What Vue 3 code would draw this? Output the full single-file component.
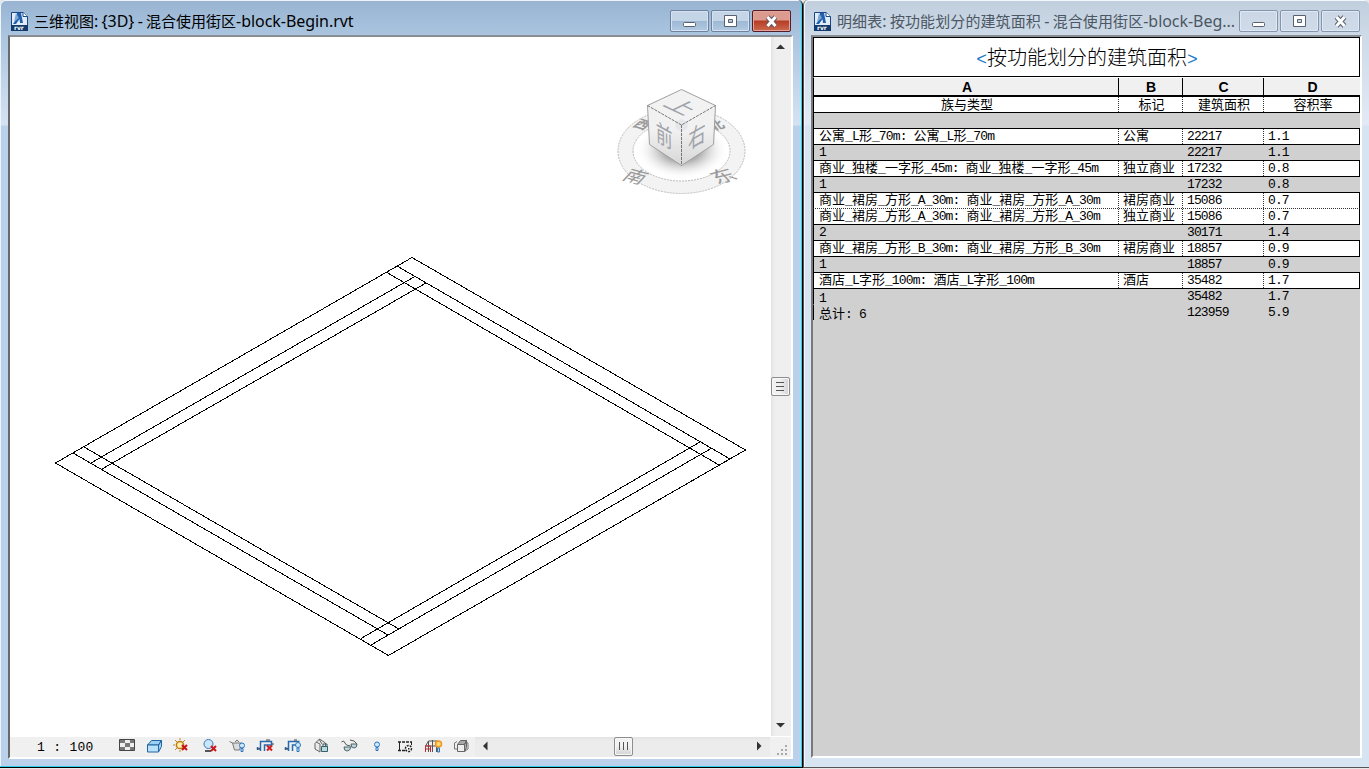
<script setup>
const rows = [
  { kind: 'gap', cells: ['', '', '', ''] },
  { kind: 'item', cells: ['公寓_L形_70m: 公寓_L形_70m', '公寓', '22217', '1.1'] },
  { kind: 'sum', cells: ['1', '', '22217', '1.1'] },
  { kind: 'item', cells: ['商业_独楼_一字形_45m: 商业_独楼_一字形_45m', '独立商业', '17232', '0.8'] },
  { kind: 'sum', cells: ['1', '', '17232', '0.8'] },
  { kind: 'item', cells: ['商业_裙房_方形_A_30m: 商业_裙房_方形_A_30m', '裙房商业', '15086', '0.7'] },
  { kind: 'item again', cells: ['商业_裙房_方形_A_30m: 商业_裙房_方形_A_30m', '独立商业', '15086', '0.7'] },
  { kind: 'sum', cells: ['2', '', '30171', '1.4'] },
  { kind: 'item', cells: ['商业_裙房_方形_B_30m: 商业_裙房_方形_B_30m', '裙房商业', '18857', '0.9'] },
  { kind: 'sum', cells: ['1', '', '18857', '0.9'] },
  { kind: 'item', cells: ['酒店_L字形_100m: 酒店_L字形_100m', '酒店', '35482', '1.7'] },
  { kind: 'sum last', cells: ['1', '', '35482', '1.7'] },
  { kind: 'total last', cells: ['总计: 6', '', '123959', '5.9'] },
]
const heads = ['族与类型', '标记', '建筑面积', '容积率']
// Latin runs and CJK runs take different faces and spacing
const runs = (s) => (s.match(/[\x20-\x7e]+|[^\x20-\x7e]+/g) || []).map((t) => ({ t, a: t.charCodeAt(0) < 127 }))
const titleLeft = runs('三维视图: {3D} - 混合使用街区-block-Begin.rvt')
const titleRight = runs('明细表: 按功能划分的建筑面积 - 混合使用街区-block-Beg...')
const redX = 'M0 0l5 5M5 0l-5 5'
</script>

<template>
  <div class="desk">
    <section class="win active">
      <header>
        <svg class="logo" width="18" height="20" viewBox="0 0 18 20">
          <path d="M.5 .5H12L16.500 4.500V18.500H.5z" fill="#e3edf7" stroke="#1a478a" />
          <path d="M12 .5V4.500H16.500" fill="#fff" stroke="#1a478a" />
          <path d="M6 1L10 1 12 11H9L8.500 7 5 12H2L6 6z" fill="#2160ae" /><path d="M5 1L8 6 3 10z" fill="#7da7d5" />
          <path d="M0 13H17V19H0z" fill="#123b6b" />
          <text x="3" y="17.500">rvr</text>
        </svg>
        <h1><span v-for="(r, i) in titleLeft" :key="i" :class="{ latin: r.a }">{{ r.t }}</span></h1>
        <div class="btns">
          <i><svg width="38" height="21"><rect x="12.500" y="11.500" width="12" height="4" rx="1" fill="#fff" stroke="#59616e" /></svg></i>
          <i><svg width="38" height="21"><path d="M12.500 4.500h12v11h-12zM16.500 8.500v3h4v-3z" fill="#fff" fill-rule="evenodd" stroke="#59616e" /></svg></i>
          <i class="close"><svg width="38" height="21"><path d="M14.500 6l8 9M22.500 6l-8 9" stroke="#66565f" stroke-width="5" /><path d="M14.500 6l8 9M22.500 6l-8 9" stroke="#fff" stroke-width="3" /></svg></i>
        </div>
      </header>
      <div class="client">
        <div class="upper">
          <svg class="canvas" width="761" height="700" viewBox="10 37 761 700">
            <g stroke="#000" fill="none" shape-rendering="crispEdges">
              <path d="M412 257.500L745.500 450 388.500 655.500 55.500 463z" />
              <path d="M397 266L730 459M386 272L719 465M414 277L91 463M426 283L102 469M84 447L399 629M73 453L388 635M700 442L361 638.500M711 448.500L371 645" />
            </g>
            <defs>
              <radialGradient id="sh"><stop offset=".4" stop-color="#777" stop-opacity=".6" /><stop offset="1" stop-color="#fff" stop-opacity="0" /></radialGradient>
              <linearGradient id="fa" x2="0" y2="1"><stop offset=".4" stop-color="#f1f1f1" /><stop offset="1" stop-color="#d7d7d7" /></linearGradient>
            </defs>
            <path d="M618 151a63.500 42.500 0 1 0 127 0a63.500 42.500 0 1 0 -127 0M633 151a48.500 30 0 1 0 97 0a48.500 30 0 1 0 -97 0" fill="#f3f3f3" fill-rule="evenodd" stroke="#bbb" stroke-dasharray="2 1" />
            <g class="dirs">
              <text transform="matrix(.8 .25 -.7 .6 632 126)">西</text>
              <text transform="matrix(.8 -.25 .5 .65 713 131)">北</text>
              <text class="big" transform="matrix(.9 .25 -.6 .65 621 179)">南</text>
              <text class="big" transform="matrix(1 -.25 .6 .65 717 184)">东</text>
            </g>
            <ellipse cx="682" cy="150" rx="46" ry="29" fill="url(#sh)" />
            <path d="M647.500 105.500L681.500 125V165.500L649.500 144.500z" fill="url(#fa)" />
            <path d="M715.500 105.500L681.500 125V165.500L713.500 144.500z" fill="url(#fa)" />
            <path d="M681.500 89.500L715.500 105.500 681.500 125 647.500 105.500z" fill="#f2f2f2" />
            <path d="M681.500 119l6 3v6l-6 4-6-4v-6z" fill="#e2e4e8" opacity=".8" />
            <path d="M647.500 105.500L681.500 89.500 715.500 105.500 713.500 144.500 681.500 165.500 649.500 144.500z" fill="none" stroke="#a0a0a0" />
            <path d="M647.500 105.500L681.500 125 715.500 105.500M681.500 125V165.500" fill="none" stroke="#777" stroke-dasharray="3 1" />
            <g class="faces">
              <text transform="matrix(.76 .42 .02 1.100 656 140)">前</text>
              <text transform="matrix(.8 -.46 -.02 1.100 688 150)">右</text>
              <text transform="matrix(1.050 .5 -.95 .46 662 105)">上</text>
            </g>
          </svg>
          <div class="vbar">
            <svg width="20" height="20"><path d="M5 12l4.500-4.500L14 12z" fill="#333" /></svg>
            <b><svg width="19" height="18"><path d="M4 4.500h8M4 8.500h8M4 12.500h8" stroke="#555" /></svg></b>
            <svg width="20" height="20"><path d="M5 7h9l-4.500 4.500z" fill="#333" /></svg>
          </div>
        </div>
        <div class="lower">
          <span class="scale">1 : 100</span>
          <div class="tools">
            <svg viewBox="111 737 28 20"><path d="M119.500 739.500h15v11h-15z" fill="#eee" stroke="#444" /><path d="M120 740h5v3h-5zM130 740h4v3h-4zM125 743h5v4h-5zM120 747h5v3h-5zM130 747h4v3h-4z" fill="#777" /></svg>
            <svg viewBox="139 737 28 20"><path d="M147.500 745l4-4.500h10l-3 4.500zM158.500 745l3-4.500v6l-3 5.500z" fill="#9bd0f5" stroke="#23669f" /><path d="M147.500 745h11v7h-11z" fill="#b9e1fb" stroke="#23669f" /></svg>
            <svg viewBox="167 737 28 20"><circle cx="180" cy="745" r="3.600" fill="#fff0b0" stroke="#ba7d18" stroke-width="1.500" /><path d="M180 738v2M173 745h2M175 740l2 2M185 740l-2 2M175 750l2-2M180 750v2" stroke="#c78b1d" /><path :d="redX" transform="translate(182 745)" stroke="#c91419" stroke-width="2" /></svg>
            <svg viewBox="195 737 28 20"><circle cx="208.500" cy="744" r="4.500" fill="#c9e6fc" stroke="#3d77b3" /><path d="M205 751h6" stroke="#555" stroke-width="2" /><path :d="redX" transform="translate(211 746)" stroke="#c91419" stroke-width="2" /></svg>
            <svg viewBox="223 737 28 20"><path d="M229.500 741.500l3 1.500 2 7h5l2-7h-9M235 742l2-2 2 2" fill="#ddd" stroke="#777" /><g fill="#cdeaff" stroke="#2d76bb"><circle cx="242" cy="745.500" r="2.500" /><path d="M241 748.500h2v3h-2z" /></g></svg>
            <svg viewBox="251 737 28 20"><path d="M260.500 751v-9.500h11v3M264.500 751v-6h8M258 748.500h2M257.500 747v3" fill="none" stroke="#266aad" stroke-width="1.500" /><path d="M266 740h4M257 749h3M272 744h2" stroke="#444" /><path :d="redX" transform="translate(267 745.500)" stroke="#d01e20" stroke-width="2" /></svg>
            <svg viewBox="279 737 28 20"><path d="M288.500 751v-9.500h11M292.500 751v-6h4M286 748.500h2M285.500 747v3" fill="none" stroke="#266aad" stroke-width="1.500" /><path d="M294 740h3M285 749h3" stroke="#444" /><g fill="#cdeaff" stroke="#2d76bb"><circle cx="298" cy="745" r="2.500" /><path d="M297 748h2v3.500h-2z" /></g></svg>
            <svg viewBox="307 737 28 20"><path d="M314.500 744l5-5 6 4v4M315 744v5l5 3v-8l-4-2M319 739l3 5" fill="#e8e8e8" stroke="#666" /><path d="M323 747v-3h4v3" fill="none" stroke="#355f68" /><path d="M321.500 746.500h6v5h-6z" fill="#b9dbdf" stroke="#355f68" /></svg>
            <svg viewBox="335 737 28 20"><path d="M341.500 742l2-1 3 4 4 1M350 740l4 1 3 3" fill="none" stroke="#555" /><path d="M344 747q0 4 3 4t4-4zM351 744q0 4 3 4t3-4z" fill="#c1d8dc" stroke="#4d666a" /></svg>
            <svg viewBox="363 737 28 20"><g fill="#cdeaff" stroke="#2d76bb"><circle cx="377" cy="744.500" r="2.500" /><path d="M376 747.500h2v3h-2z" /></g></svg>
            <svg viewBox="391 737 28 20"><path d="M398 742h14M398 750.500h8" stroke="#222" stroke-width="1.500" stroke-dasharray="3 1" /><path d="M399.500 742v9M411.500 742v3" stroke="#222" /><circle cx="408.500" cy="748.500" r="3" fill="#fff" stroke="#222" stroke-width="1.500" stroke-dasharray="2 1" /><path d="M408 748h1.500v1.500H408z" fill="#222" /></svg>
            <svg viewBox="419 737 28 20"><path d="M425.500 746l3-5h9M428.500 741v11M432.500 740v12M436.500 741v11M425.500 746h11" fill="none" stroke="#555" /><path d="M425.500 752v-6h5v6M425.500 749h5" fill="none" stroke="#c3282d" /><circle cx="438.500" cy="744" r="3" fill="#ffd968" stroke="#ee9525" stroke-width="1.500" /><path d="M437.500 748h2v4h-2z" fill="#bcdcf5" stroke="#2d76bb" /></svg>
            <svg viewBox="447 737 28 20"><path d="M454 743.500l3-2M464 741l4 2v6l-3 2M454.500 743v6h3" fill="none" stroke="#777" /><path d="M457.500 744.500l3-4h6l-2 4zM464.500 744.500l2-4v7l-2 4.500z" fill="#aaa" stroke="#666" /><path d="M457.500 744.500h7v7h-7z" fill="#eee" stroke="#666" /></svg>
          </div>
          <div class="hbar">
            <svg width="20" height="19"><path d="M12.500 4.500v9L8 9z" fill="#333" /></svg>
            <b><svg width="18" height="18"><path d="M4.500 4v8M8.500 4v8M12.500 4v8" stroke="#555" /></svg></b>
            <svg width="20" height="19"><path d="M7 4.500v9l4.500-4.500z" fill="#333" /></svg>
          </div>
          <svg class="grip" width="21" height="20"><path d="M15 9h2M11 13h2M15 13h2M7 17h2M11 17h2M15 17h2" stroke="#aaa" stroke-width="2" /></svg>
        </div>
      </div>
    </section>

    <section class="win idle">
      <header>
        <svg class="logo" width="18" height="20" viewBox="0 0 18 20">
          <path d="M.5 .5H12L16.500 4.500V18.500H.5z" fill="#e3edf7" stroke="#1a478a" />
          <path d="M12 .5V4.500H16.500" fill="#fff" stroke="#1a478a" />
          <path d="M6 1L10 1 12 11H9L8.500 7 5 12H2L6 6z" fill="#2160ae" /><path d="M5 1L8 6 3 10z" fill="#7da7d5" />
          <path d="M0 13H17V19H0z" fill="#123b6b" />
          <text x="3" y="17.500">rvr</text>
        </svg>
        <h1><span v-for="(r, i) in titleRight" :key="i" :class="{ latin: r.a }">{{ r.t }}</span></h1>
        <div class="btns">
          <i><svg width="38" height="21"><rect x="12.500" y="11.500" width="12" height="4" rx="1" fill="#fff" stroke="#59616e" /></svg></i>
          <i><svg width="38" height="21"><path d="M12.500 4.500h12v11h-12zM16.500 8.500v3h4v-3z" fill="#fff" fill-rule="evenodd" stroke="#59616e" /></svg></i>
          <i><svg width="38" height="21"><path d="M14.500 6l8 9M22.500 6l-8 9" stroke="#59616e" stroke-width="5" /><path d="M14.500 6l8 9M22.500 6l-8 9" stroke="#fff" stroke-width="3" /></svg></i>
        </div>
      </header>
      <div class="client sheet">
        <div class="name"><em>&lt;</em>按功能划分的建筑面积<em>&gt;</em></div>
        <div class="row letters"><span>A</span><span>B</span><span>C</span><span>D</span></div>
        <div class="row item heads"><span v-for="h in heads" :key="h">{{ h }}</span></div>
        <div v-for="(r, i) in rows" :key="i" class="row" :class="r.kind">
          <span v-for="(c, j) in r.cells" :key="j"><u v-for="(p, k) in runs(c)" :key="k" :class="{ mono: p.a }">{{ p.t }}</u></span>
        </div>
      </div>
    </section>
  </div>
</template>

<style>
body { overflow: hidden; background: #000; }
</style>
<style scoped>
* { box-sizing: border-box; }
svg { display: block; flex: none; fill: none; }
.desk { display: flex; width: 1369px; height: 769px; background: #e8e8e8; font-family: "Noto Sans CJK SC", sans-serif; color: #000; }
.win { height: 768px; display: flex; flex-direction: column; flex: none; }
.active {
  width: 803px; padding: 0 9px 0 8px; border: solid #000; border-width: 0 1px 1px 0;
  border-radius: 5px 5px 0 0;
  box-shadow: inset -1px -1px #2ad0ec, inset 1px 1px #eef4fb;
  background: linear-gradient(#97b3d1, #abc5e0 36px, #d5e3f3 125px, #b9d1ea 126px);
}
.idle {
  width: 566px; padding: 0 8px 0 7px; border-left: 1px solid #555; border-bottom: 1px solid #555;
  border-radius: 5px 5px 0 0;
  box-shadow: inset 1px 1px #f2f7fc;
  background: linear-gradient(#c0cedd, #cedae8 36px, #e2ebf5 125px, #d7e4f2 126px);
}
header { height: 35px; flex: none; display: flex; padding-left: 3px; }
.active header { padding-right: 2px; }
.idle header { padding-right: 1px; }
.logo { margin-top: 12px; }
.logo text { font: bold 6px "DejaVu Sans", sans-serif; fill: #fff; }
h1 { margin: 8px 0 0 5px; font-size: 15px; line-height: 26px; font-weight: 400; white-space: pre; flex: 1; }
.latin { font-family: "Noto Sans", sans-serif; font-size: 16px; letter-spacing: -.05px; word-spacing: -.8px; }
.idle h1 { color: #4c5763; letter-spacing: .1px; }
.btns { display: flex; gap: 2px; margin-top: 10px; height: 23px; }
.btns i { width: 39px; height: 22px; border: 1px solid #6e829f; border-radius: 2px; box-shadow: inset 0 0 0 1px #d5e2f0; background: linear-gradient(#c5d5e8 48%, #9eb8d4 50%, #b2cae2); }
.btns .close { border-color: #551d27; box-shadow: inset 0 0 0 1px #e3a59c; background: linear-gradient(#dd9a8f 45%, #b63c24 50%, #cc6a50); }
.idle .btns i { border-color: #8495ac; box-shadow: inset 0 0 0 1px #dfe9f3; background: linear-gradient(#cbd7e6, #cfdbe8); }
.client { border: 2px solid #77797e; border-color: #898d94 #fff #fff #696969; height: 724px; flex: none; background: #fff; display: flex; flex-direction: column; }
.upper { display: flex; height: 700px; }
.faces text { font-size: 22px; fill: #9fa3a9; font-weight: 400; }
.dirs text { font-size: 16px; fill: #999; font-weight: 700; }
.dirs .big { font-size: 22px; fill: #999; font-weight: 400; }
.vbar { width: 20px; height: 699px; background: linear-gradient(90deg, #e3e3e3, #efefef 20%); display: flex; flex-direction: column; justify-content: space-between; }
.vbar b, .hbar b { width: 19px; height: 19px; border: 1px solid #8d8d8d; border-radius: 2px; box-shadow: inset 0 0 0 1px #f7f7f7; background: linear-gradient(90deg, #f2f2f2 45%, #d2d2d8); }
.hbar b { background: linear-gradient(#f2f2f2 45%, #d2d2d8); margin-left: 1px; }
.lower { height: 20px; background: #f0f0f0; display: flex; }
.scale { width: 101px; padding-left: 27px; font: 13px/21px "Liberation Mono", monospace; letter-spacing: .3px; white-space: pre; }
.tools { display: flex; }
.tools svg { width: 28px; height: 20px; }
.hbar { flex: 1; display: flex; justify-content: space-between; background: linear-gradient(#e3e3e3, #ececec 20%); }
.sheet { height: 723px; width: 551px; border-left-color: #77797e; background: #d0d0d0; }
.name { width: 547px; height: 40px; border: 1px solid #000; background: #fff; text-align: center; font-size: 20px; line-height: 38px; font-weight: 300; white-space: nowrap; padding-left: 1px; }
.name em { font: 18px "Liberation Mono", monospace; color: #1679cb; }
.row { display: grid; grid-template-columns: 304px 64px 81px 97px; height: 16px; width: 547px; border-left: 1px solid #000; font-size: 13px; line-height: 12px; white-space: pre; }
.row span { padding-left: 5px; height: 15px; }
.row span:nth-child(n+2) { padding-left: 4px; }
.row.letters { height: 20px; border-bottom: 2px solid #000; border-top: 1px solid #fff; background: #f0f0f0; font: bold 14px/19px "Liberation Sans", sans-serif; text-align: center; }
.row.letters span { height: 17px; padding: 0 0 0 2px; }
.row.letters span + span { border-left: 1px solid #000; padding-left: 1px; }
.row.heads { text-align: center; border-top: 0; line-height: 14px; height: 15px; }
.row.heads span { padding-left: 2px; }
.item { background: #fff; border-top: 1px solid #000; border-right: 1px solid #000; }
.item span + span { border-left: 1px dotted #333; }
.again { border-top: 1px dotted #333; }
.sum, .gap, .total { border-top: 1px solid #000; }
.sum span + span, .total span + span { border-left: 1px solid transparent; }
.total.last { border-top: 1px solid transparent; background-clip: padding-box; }
.last span:first-child { padding-top: 2px; }
u { text-decoration: none; }
.mono { font-family: "Liberation Mono", monospace; letter-spacing: -.87px; }
</style>
